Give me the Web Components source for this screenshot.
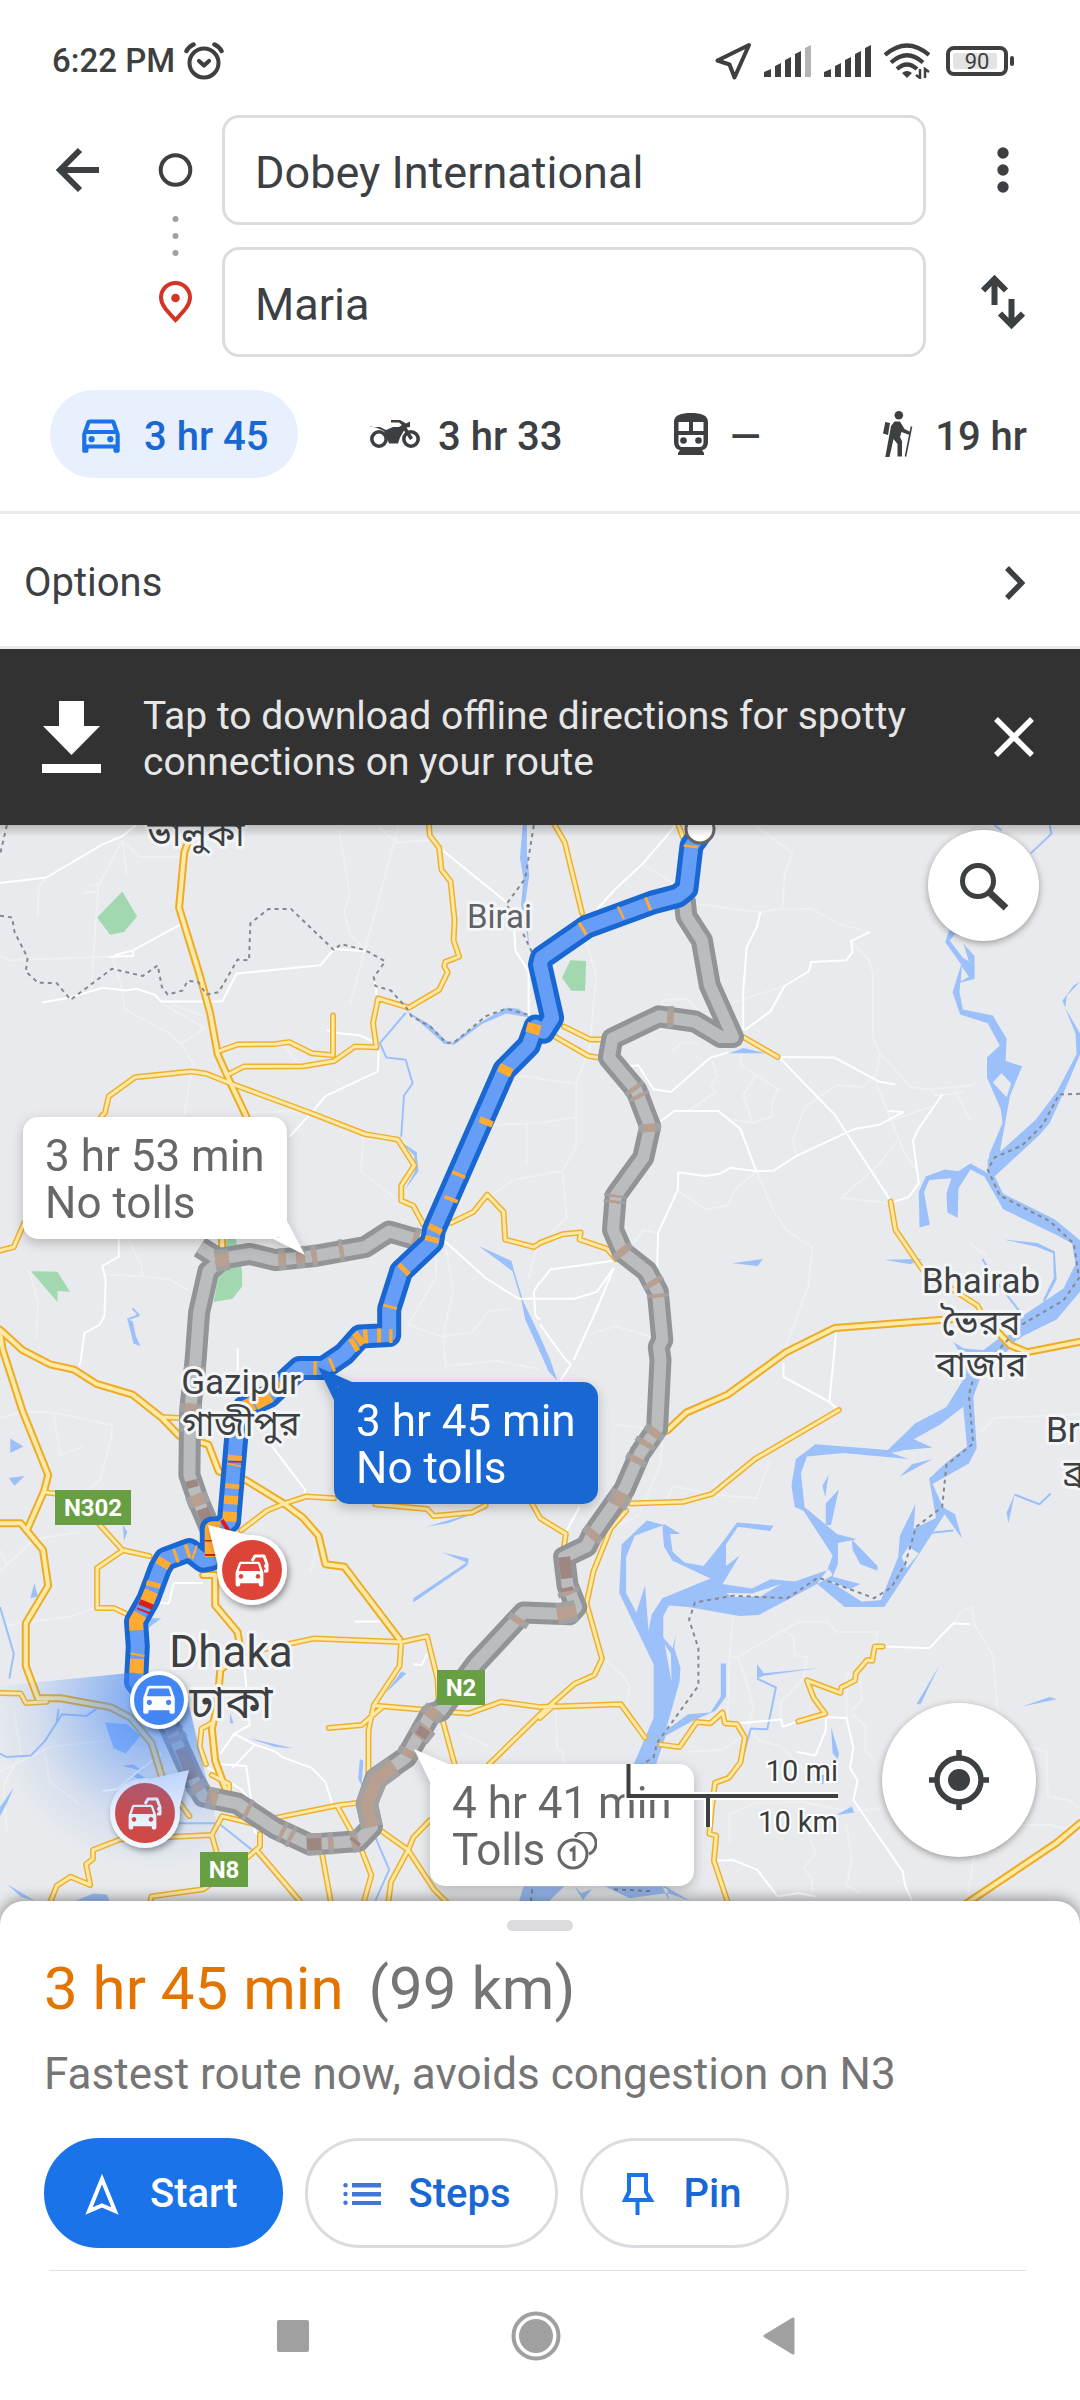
<!DOCTYPE html>
<html lang="en">
<head>
<meta charset="utf-8">
<meta name="viewport" content="width=device-width, initial-scale=1">
<title>Directions</title>
<style>
  body { margin: 0; background: #fff; color: #3c4043; font-family: Roboto, "Noto Sans", sans-serif; }
</style>
</head>
<body>
<directions-page></directions-page>

<script>
const RESET = `
  *, *::before, *::after { box-sizing: border-box; }
  :host { display: block; }
  button { font: inherit; color: inherit; background: none; border: 0; padding: 0; margin: 0; cursor: pointer; }
  svg { display: block; flex: none; }
`;
const define = (name, html) => {
  const template = document.createElement('template');
  template.innerHTML = html;
  customElements.define(name, class extends HTMLElement {
    constructor() {
      super();
      this.attachShadow({ mode: 'open' }).append(template.content.cloneNode(true));
    }
  });
};

const CAR_OUTLINE = 'M18.92 6.01C18.72 5.42 18.16 5 17.5 5h-11c-.66 0-1.21.42-1.42 1.01L3 12v8c0 .55.45 1 1 1h1c.55 0 1-.45 1-1v-1h12v1c0 .55.45 1 1 1h1c.55 0 1-.45 1-1v-8l-2.08-5.99zM6.85 7h10.29l1.08 3.11H5.77L6.85 7zM19 17H5v-5h14v5z';
const CAR_SOLID = 'M18.92 6.01C18.72 5.42 18.16 5 17.5 5h-11c-.66 0-1.21.42-1.42 1.01L3 12v8c0 .55.45 1 1 1h1c.55 0 1-.45 1-1v-1h12v1c0 .55.45 1 1 1h1c.55 0 1-.45 1-1v-8l-2.08-5.99zM6.5 16c-.83 0-1.5-.67-1.5-1.5S5.67 13 6.5 13s1.5.67 1.5 1.5S7.33 16 6.5 16zm11 0c-.83 0-1.5-.67-1.5-1.5s.67-1.5 1.5-1.5 1.5.67 1.5 1.5-.67 1.5-1.5 1.5zM5 11l1.5-4.5h11L19 11H5z';

/* ---------- status bar ---------- */
define('status-bar', `
<style>${RESET}
  :host { display: flex; align-items: center; height: 115px; padding: 6px 66px 0 52px; color: #3f3f3f; }
  .time { font-size: 33px; font-weight: 500; line-height: 40px; margin-right: 9px; }
  .spacer { flex: 1; }
  .icons { display: flex; align-items: center; gap: 12px; }
  .battery { display: flex; align-items: center; padding-left: 4px; }
  .cell { width: 62px; height: 30px; border: 4px solid #3f3f3f; border-radius: 8px; padding: 3px; }
  .level { display: block; width: 44px; height: 16px; background: #e3e3e3; border-radius: 2px; font-size: 22px; line-height: 17px; text-align: center; padding-left: 4px; }
  .tip { width: 4px; height: 10px; margin-left: 2px; border-radius: 2px; background: #3f3f3f; }
</style>
<span class="time">6:22 PM</span>
<svg width="40" height="38" viewBox="0 0 40 38" fill="none" stroke="#3f3f3f" stroke-linecap="round">
  <circle cx="20" cy="21" r="14.500" stroke-width="4"/>
  <path d="M2.500 9Q5 4.500 9.500 2.500M37.500 9Q35 4.500 30.500 2.500" stroke-width="4.500"/>
  <path d="M15 19l5 4.500 5-4.500" stroke-width="4.200" stroke-linejoin="round"/>
</svg>
<span class="spacer"></span>
<span class="icons">
  <svg width="37" height="38" viewBox="0 0 37 38" fill="none" stroke="#3f3f3f" stroke-width="4" stroke-linejoin="round"><path d="M34 3L2.500 18.500 14.500 22.500 19.500 35.500z"/></svg>
  <svg width="48" height="32" viewBox="0 0 48 32" fill="#3f3f3f"><path d="M0 32v-5l7-3v8zM11 32V21l6-3v14zM21 32V15l6-3v20zM31 32V9l6-3v26z"/><path d="M41 32V3l6-3v32z" fill="#b3b3b3"/></svg>
  <svg width="48" height="32" viewBox="0 0 48 32" fill="#3f3f3f"><path d="M0 32v-5l7-3v8zM11 32V21l6-3v14zM21 32V15l6-3v20zM31 32V9l6-3v26zM41 32V3l6-3v32z"/></svg>
  <svg width="46" height="36" viewBox="0 0 46 36" fill="none" stroke="#3f3f3f" stroke-width="4.200"><path d="M1 12Q23-7 45 12M7 19.500Q23 5 39 19.500M13 26Q23 17 33 26"/><path d="M18 30q5-4 10 0l-5 5z" fill="#3f3f3f" stroke="none"/><path d="M36 26v9l-4-3M41 35v-9l4 3" stroke-width="2.500"/></svg>
  <span class="battery"><span class="cell"><span class="level">90</span></span><span class="tip"></span></span>
</span>
`);

/* ---------- origin and destination ---------- */
customElements.define('place-field', class extends HTMLElement {
  constructor() {
    super();
    this.attachShadow({ mode: 'open' }).innerHTML = `
<style>${RESET}
  input { display: block; width: 100%; height: 110px; padding: 4px 30px 0; border: 3px solid #dadce0; border-radius: 17px; background: #fff; color: #3c4043; font: 400 45px/54px Roboto, sans-serif; outline: 0; }
</style><input type="text">`;
  }
  connectedCallback() {
    const input = this.shadowRoot.querySelector('input');
    input.value = this.getAttribute('value');
    input.setAttribute('aria-label', this.getAttribute('label'));
  }
});

define('route-header', `
<style>${RESET}
  :host { display: grid; grid-template-columns: 129px 93px 1fr 154px; grid-template-rows: 110px 110px; row-gap: 22px; }
  button { display: flex; align-items: center; justify-content: center; }
  .back { padding-left: 26px; }
  .stops { grid-column: 2; grid-row: 1 / 3; justify-self: center; }
  .destination { grid-column: 3; }
</style>
<button class="back" aria-label="Back"><svg width="46" height="46" viewBox="0 0 46 46" fill="none" stroke="#3c4043" stroke-width="6"><path d="M44 23H6M25 3L5 23l20 20"/></svg></button>
<svg class="stops" width="47" height="242" viewBox="0 0 47 242" fill="none">
  <circle cx="23.500" cy="55" r="14.800" stroke="#3c4043" stroke-width="4"/>
  <g fill="#9aa0a6"><circle cx="23.500" cy="104" r="3"/><circle cx="23.500" cy="121" r="3"/><circle cx="23.500" cy="138" r="3"/></g>
  <path d="M23.500 205C15 196 9 190 9 182.500a14.500 14.500 0 0 1 29 0C38 190 32 196 23.500 205z" stroke="#d33426" stroke-width="4"/><circle cx="23.500" cy="183" r="4.300" fill="#d33426"/>
</svg>
<place-field label="Starting point" value="Dobey International"></place-field>
<button aria-label="More options"><svg width="12" height="46" viewBox="0 0 12 46" fill="#3c4043"><circle cx="6" cy="6" r="5.700"/><circle cx="6" cy="23" r="5.700"/><circle cx="6" cy="40" r="5.700"/></svg></button>
<place-field class="destination" label="Destination" value="Maria"></place-field>
<button aria-label="Swap start and destination"><svg width="44" height="56" viewBox="0 0 44 56" fill="none" stroke="#3c4043" stroke-width="6"><path d="M13.500 31V5M2 16.500L13.500 5 25 16.500M30.500 25v26M19 39.500L30.500 51 42 39.500"/></svg></button>
`);

/* ---------- travel modes ---------- */
define('travel-mode', `
<style>${RESET}
  button { display: flex; align-items: center; height: 88px; padding: 0 28px; border-radius: 44px; font-size: 40px; font-weight: 500; line-height: 48px; white-space: nowrap; gap: 18px; color: #3c4043; }
  :host([selected]) button { background: #e8f0fe; color: #1967d2; padding-right: 30px; }
  span { padding-top: 6px; }
</style>
<button><slot name="icon"></slot><span><slot></slot></span></button>
`);

define('travel-modes', `
<style>${RESET}
  :host { display: grid; grid-template-columns: 293fr 301fr 212fr 199fr; padding: 33px 25px 33px 50px; border-bottom: 3px solid #e8eaed; }
</style>
<travel-mode selected><svg slot="icon" width="48" height="50" viewBox="1 0 23 24" fill="#1a73e8"><path d="${CAR_OUTLINE}"/><circle cx="7.500" cy="14.500" r="1.500"/><circle cx="16.500" cy="14.500" r="1.500"/></svg>3 hr 45</travel-mode>
<travel-mode><svg slot="icon" width="50" height="28" viewBox="0 0 50 28" fill="#3c4043"><g fill="none" stroke="#3c4043" stroke-width="3.600"><circle cx="9" cy="19" r="7.200"/><circle cx="41" cy="19" r="7.200"/></g><path d="M0 7h10l6 3 7-3h6l3-2-3-2.500h-8V0h9l6 3.500L40 1.500V7l-3.500.5L43 18l-3 2-6-9.500-4 7-2 6H19l-2-5.500-3-7-8-3.500-6-1z"/></svg>3 hr 33</travel-mode>
<travel-mode><svg slot="icon" width="42" height="42" viewBox="-4 0 42 42"><path d="M17 0C7 0 0 2 0 9v20c0 5 3 8 6 8l-2 3v2h26v-2l-2-3c3 0 6-3 6-8V9c0-7-7-9-17-9zM4.500 9H15v9H4.500zM19 9h10.500v9H19zM4.500 22h25v7c0 4-2 5-4 5h-17c-2 0-4-1-4-5z" fill="#3c4043" fill-rule="evenodd"/><circle cx="9.500" cy="27.500" r="3.300" fill="#3c4043"/><circle cx="24.500" cy="27.500" r="3.300" fill="#3c4043"/></svg>—</travel-mode>
<travel-mode><svg slot="icon" width="36" height="46" viewBox="-2 0 36 46" fill="#3c4043"><circle cx="15.800" cy="4.300" r="4.300"/><path d="M2.300 11l4.700 1-2 12-5-1.500zM11.500 10.500l5.500 0 4.500 7.500 6 3-1 3-8-3-1.500 5 2 4v15.500h-4.500V33l-4-5-4 18H2.300L8 15z"/><path d="M28.500 15.500l-6 30" stroke="#3c4043" stroke-width="1.600"/></svg>19 hr</travel-mode>
`);

define('options-row', `
<style>${RESET}
  :host { border-bottom: 3px solid #e8eaed; }
  button { display: flex; align-items: center; justify-content: space-between; width: 100%; height: 132px; padding: 6px 54px 0 24px; font-size: 40px; line-height: 48px; }
</style>
<button><span>Options</span><svg width="22" height="34" viewBox="0 0 22 34" fill="none" stroke="#3c4043" stroke-width="5.500"><path d="M3 2l14.500 15L3 32"/></svg></button>
`);

define('offline-banner', `
<style>${RESET}
  :host { display: flex; align-items: center; min-height: 176px; padding: 0 44px 0 42px; background: #323232; color: #e6e6e6; }
  p { flex: 1; margin: 4px 0 0 42px; font-size: 39px; line-height: 46px; }
</style>
<svg width="59" height="72" viewBox="0 0 59 72" fill="#fff"><path d="M17 0h25v25h16L29.500 54 1 25h16zM0 63h59v9H0z"/></svg>
<p>Tap to download offline directions for spotty connections on your route</p>
<button aria-label="Dismiss"><svg width="44" height="44" viewBox="0 0 44 44" stroke="#fff" stroke-width="5.500"><path d="M4 4l36 36M40 4L4 40"/></svg></button>
`);

/* ---------- map ---------- */
define('route-callout', `
<style>${RESET}
  :host { position: absolute; width: 264px; height: 122px; padding: 16px 0 0 22px; background: #fff; color: #676767; border-radius: 15px; font-size: 44px; line-height: 47px; white-space: nowrap; filter: drop-shadow(0 4px 6px rgba(0,0,0,.22)); }
  :host([active]) { background: #1967d2; color: #fff; }
  .tail { position: absolute; fill: #fff; display: none; }
  :host([active]) .tail { fill: #1967d2; }
  :host([tail="end"]) .end { display: block; right: -18px; bottom: -16px; }
  :host([tail="start"]) .start { display: block; left: -16px; top: -15px; }
  div { display: flex; align-items: center; gap: 12px; }
</style>
<svg class="tail end" width="34" height="34" viewBox="0 0 34 34"><path d="M0 17h8L16 0 34 34z"/></svg>
<svg class="tail start" width="34" height="34" viewBox="0 0 34 34"><path d="M0 0l34 15v4H20l-4 14z"/></svg>
<div><slot></slot></div><div><slot name="tolls"></slot></div>
`);

/* The drawing data is kept in four sheets; each letter selects the sheet whose
   origin and scale the points after it are measured in. */
const SHEETS = { A: [0, 820, .34439, .34439], B: [540, 820, .34439, .34439], C: [0, 1350, .34439, .35714], D: [540, 1350, .34439, .35714] };
const trace = (text, close) => text.trim().split(/\s*;\s*/).filter(Boolean).map(line => {
  let sheet = SHEETS.A, first = true, d = '';
  for (const token of line.split(/\s+/)) {
    if (SHEETS[token]) { sheet = SHEETS[token]; continue; }
    const [x, y] = token.split(',').map(Number);
    d += (first ? 'M' : 'L') + (sheet[0] + x * sheet[2]).toFixed(1) + ' ' + (sheet[1] + y * sheet[3]).toFixed(1);
    first = false;
  }
  return d + (close ? 'z' : '');
}).join('');

const WATER = `
A 1518,10 1530,10 1530,100 1537,160 1525,240 1538,380 1530,330 1513,245 1520,170 1510,110;
A 1180,555 1245,592 1298,643 1310,648 1390,590 1470,545 1505,548 1545,575 1470,562 1400,592 1320,652 1290,650 1240,605;
A 1165,935 1210,965 1215,1020 1175,1075 1205,1020 1203,975;
A 1390,1237 1485,1280 1493,1310 1520,1400 1568,1500 B 30,1568 D 50,85 25,60 B 0,1545 A 1525,1450 1515,1400 1488,1310;
A 370,1450 385,1455 395,1500 408,1528 388,1520;
B 550,677 590,662 655,677; B 558,1287 647,1275 632,1295; B 1000,1277 1110,1275 1075,1290;
B 1345,1218 1445,1228 1495,1253 1500,1335 1465,1400 1460,1395 1492,1330 1490,1258 1440,1238;
B 1188,320 1290,355 1205,332 1190,350 1228,400 1245,410 1230,360 1262,395 1262,462 1220,472 1218,500 1228,550 1315,568 1355,635 1352,700 1400,715 1365,800 1335,965 1300,1025 1305,970 1343,880 1338,840 1298,748 1298,690 1335,655 1300,590 1220,565 1198,500 1223,420 1177,355;
B 1568,470 1530,510 1525,545 1568,620 1568,680 1530,770 1480,880 1450,915 1320,1035 1345,1085 1495,1160 1568,1220 1568,1370 1500,1450 1400,1500 1385,1512 1395,1445 1520,1360 1555,1290 1545,1230 1500,1205 1345,1130 1290,1035 1250,1015 1215,1070 1213,1155 1183,1140 1180,1085 1195,1040 1130,1045 1115,1080 1132,1175 1102,1183 1100,1080 1120,1035 1175,1015 1215,1020 1250,997 1300,1025 1300,985 1340,960 1440,870 1500,790 1558,680 1555,620 1517,525 1550,480;
B 1395,1490 1370,1530 D 1290,60 1235,60 1235,20 B 1280,1545 1340,1500;
B 1200,1515 1230,1535 1300,1540 1270,1550 1215,1540;
D 1225,90 1240,60 1285,60 1255,140 1160,210 1085,250 1140,273 1060,280 1020,288 1070,305 880,288 775,298 758,345 768,440 862,515 920,530 865,540 865,600 850,635 930,655 900,670 850,650 805,655 835,615 850,575 765,450 740,440 730,380 743,305 800,264 1010,280 1090,205 1180,160;
D 1240,60 1285,60 1258,130 1268,275 1245,318 1140,375 1170,440 1205,460 1225,528 1175,460 1095,580 1000,720 885,720 805,655 845,650 935,705 990,700 1040,580 1045,520 1090,432 1085,500 1150,470 1130,360 1180,315 1240,270 1228,150;
D 805,655 850,630 840,615 740,648 670,642 615,668 530,655 580,575 540,605 540,545 575,495 668,507 678,492 572,483 525,545 475,605 420,595 385,565 378,515 408,515 360,487 355,495 360,550 385,590 495,640 355,695 325,740 315,785 305,660 280,735 250,680 250,580 275,520 360,490 310,477 237,545 230,680 330,880 330,1030 270,1165 335,1165 365,1080 440,1040 510,1010 540,970 540,878 525,878 525,970 495,1015 430,1020 365,1065 405,930 408,890 390,835 395,795 385,835 358,805 358,745 375,715 430,720 580,745 635,742;
D 905,530 980,605 980,618 930,600 908,560; D 1045,355 1080,320 1140,305; D 838,350 828,412 820,380; D 868,390 845,490 830,490 830,430;
D 1360,485 1355,455 1378,405; D 1160,882 1105,992 1093,992; D 1400,998 1480,972 1500,978; D 845,1055 868,1130 865,1145 850,1130; D 630,880 650,905 810,890 650,912 630,920; D 860,1302 905,1278 912,1295;
C 1500,1568 1520,1502 1568,1502 D 70,1502 0,1568; D 100,1502 125,1540 150,1510 120,1520; D 190,1502 365,1502 435,1542 370,1520 260,1535;
D 355,1502 375,1542 370,1510;
C 30,248 68,270 30,288; C 25,358 72,353 42,380; C 357,490 370,510 360,535; C 1237,495 1380,455 1442,435 1300,485; C 1283,567 1360,583 1360,597; C 1200,695 1362,590 1355,605 1200,707; C 100,652 110,690 88,695; C 440,750 468,752 420,785; C 1180,905 1120,960 1165,900;
C 305,1043 370,1048 408,1080 365,1130 330,1115; C 355,1165 385,1160 420,1180; C 0,1280 40,1225 20,1270 0,1305; C 723,1087 850,1115 800,1112; C 668,1015 678,1045 668,1045; C 1045,1145 1055,1150 1050,1220 1040,1200; C 20,1495 100,1542 60,1530; C 220,1542 270,1522 310,1525 318,1542;
C 380,1190 400,1185 440,1210 410,1205`;
const STREAMS = `
A 1178,560 1103,648 1122,690 1178,696 1198,765 1173,800 1165,920; A 370,1450 403,1438 385,1418;
B 1480,15 1485,40 1425,97; B 1320,15 1340,30; B 1285,1275 1300,1300; B 1325,1340 1395,1430; D 1378,405 1450,432 1483,402; D 1130,512 1200,505;
D 630,920 685,945 660,1062 612,1060 592,1130; C 0,720 40,850 27,920; C 408,1080 340,1060; C 0,1130 20,1140 90,1135 130,1095 180,1020 250,1025 280,1005; C 170,1005 165,1040; C 520,1325 635,1325 745,1410 860,1540; C 1088,1360 1130,1455 1090,1542; D 822,1190 820,1215`;
const ISLANDS = `B 1340,735 1368,765 1355,805 1315,762; B 1225,425 1245,455 1222,468; D 1070,550 1100,570 1065,610 1050,580; D 362,825 380,850 382,930; D 540,680 615,682 700,655 640,690 560,692`;
const PARKS = `A 355,208 398,280 360,325 320,333 282,283; A 90,1310 167,1312 203,1370 167,1368 167,1400; A 660,1215 685,1215 690,1250 703,1310 703,1355 675,1390 620,1400 640,1300; B 88,407 134,409 131,496 91,496 64,458`;
const LANES = `
A 355,60 285,190 265,490; A 355,60 405,107 525,107; A 355,60 368,160; A 0,395 30,407 315,397; A 110,280 112,195 135,165; A 255,190 295,183; A 242,212 288,206; A 985,30 1015,210 1000,270 1018,335 1055,370; A 1100,20 1150,65 1250,58; A 1158,15 1015,540; A 325,400 350,470 362,550 490,618 525,650 560,705 535,860; A 467,530 595,605 525,650; A 500,535 590,570; A 720,850 880,845; A 810,635 860,700; A 1055,920 1048,1020 1150,1100; A 1568,1030 1490,1045 1400,1110; A 1430,885 1568,880; A 1480,740 1568,750; A 1530,885 1530,1000; A 1268,1230 1265,1330 1185,1465 1280,1500 1370,1488 1420,1425 1490,1420; A 1295,1240 1315,1370 1290,1480 1290,1568; A 1560,1240 1535,1330; A 300,1320 415,1325 495,1335 545,1365; A 370,1215 410,1290 415,1325; A 85,1310 110,1400 105,1510;
B 640,268 450,243; B 705,250 710,160 733,95 630,20; B 640,268 705,257 790,258 870,303 958,325; B 903,352 955,405 967,450 967,635 988,680 975,740 940,775 860,770 768,835 735,930 745,975; B 988,680 1078,775; B 975,760 1055,960 1095,1020; B 1075,775 1130,782 1260,770 1262,760; B 1140,830 1030,870; B 1135,782 1150,800 1230,790; B 1205,785 1250,875; B 710,482 560,530; B 435,842 510,790 495,770 515,745 500,700; B 583,670 583,712 628,740 590,800 617,880 675,860 672,830 690,780 628,740; B 560,870 617,878; B 628,1020 680,1140 720,1195 790,1240 780,1350 725,1500 700,1568; B 628,1020 565,1075 545,1120 480,1130 402,1078; B 1035,935 985,1000 875,1098 1015,1112; B 130,340 163,450 145,660 105,765 105,950 65,1020 78,1155 30,1200; B 105,765 0,752; B 105,862 0,880; B 65,1020 0,1030; B 140,1495 220,1470 320,1500; B 270,1230 300,1190 340,1200; B 385,670 415,645 460,650; B 300,130 390,185; B 340,560 360,522 430,520 460,555; B 1248,1230 1295,1265;
C 0,190 70,172 155,175 325,210 325,240 290,365 240,400; C 155,175 175,295 240,270; C 0,560 20,600; C 25,770 210,745 280,720; C 0,1180 150,1110 300,1095 470,1130; C 130,1130 145,1210 230,1270; C 0,620 100,530 230,510; C 1290,0 1295,45 1440,30 1568,55; C 900,625 935,510; C 1340,1075 1420,1110; C 40,1010 60,1130 10,1220 20,1350;
D 365,430 385,380 500,405 628,415 668,310; D 500,400 520,360; D 220,210 320,220 360,200 350,320 285,465 200,500; D 1280,230 1320,190 1568,180; D 185,865 240,910 260,945 250,1000; D 560,740 550,860 575,860 705,785 755,760 835,762 862,790 980,790 970,830; D 550,860 545,1040; D 575,860 600,930 620,1000 605,1060 640,1095 700,1110 770,1180; D 705,785 735,800 740,855 775,860 765,920 700,985 700,1035; D 890,900 890,1030; D 905,1010 935,980 930,930 890,900; D 905,1020 945,1050 945,1120 970,1150; D 1200,765 1225,730 1255,720 1260,765 1315,855 1330,1020; D 1420,1110 1470,1125 1475,1250 1535,1260 1568,1285; D 985,1285 890,1290 760,1265 620,1270 550,1300 550,1380; D 760,1300 800,1410 765,1450 790,1480 790,1520; D 890,1330 905,1430 890,1500 930,1520; D 1240,1542 1260,1420; D 1568,1350 1480,1330 1400,1330; D 45,1000 50,1115 65,1125 70,1160; D 430,1125 530,1120 590,1080`;
const STREETS = `
A 0,183 135,167 295,72 355,47 395,15; A 315,397 387,395 387,378 335,392 330,400; A 387,378 525,303; A 122,530 205,515 297,487 365,495 395,490 450,508 467,527 645,527 687,446 930,422 970,375 1060,380; A 1088,470 1095,515; A 1285,88 1470,238; A 1493,320 1497,380 1535,440 1535,570; A 948,610 990,620 1045,625 1085,645; A 1100,670 1097,730 945,802 915,838 840,920; A 345,1215 345,1268 297,1295 307,1335 303,1440 290,1465 245,1490 235,1568 C 230,45; A 690,1535 C 690,60; A 1290,1222 1410,1330 1505,1390 B 0,1390 100,1390 165,1370 215,1300; A 1568,1340 1550,1370 1555,1440 1568,1450; B 215,1280 30,1305 0,1345; B 215,1300 165,1420 98,1568; B 0,1465 75,1568 D 90,40 60,85; B 395,15 295,130 215,205 165,260;
B 640,268 630,310 600,370 590,500 590,610; B 595,610 670,555 710,482 780,440 788,412 890,407 908,383 903,352 958,325; B 545,675 495,690 380,790 330,782 285,712 260,715; B 350,875 390,845 518,845 582,897 628,1020; B 695,688 855,690 985,760 1032,768; B 695,690 855,855 1018,1105; B 1025,1110 1070,1095 1100,1055 1083,930 1100,895 1168,797; B 1013,845 1055,848 985,885 910,898 745,975 678,1018 628,1020 553,1010 523,1027 478,1034 402,1023 400,1075 343,1198 340,1300;
B 860,1480 D 855,0 840,145 862,165; D 840,145 707,75 707,35; C 775,250 830,320 885,390 885,400; C 590,652 505,652 490,710 465,708; C 1030,760 1120,760; C 1240,850 1225,882 1200,880; C 640,1130 680,1075 725,1050 710,890; C 675,1170 740,1105 800,1125 820,1140 905,1170 945,1210 965,1270; C 590,1160 700,1230 730,1265 740,1350 765,1370; C 640,1160 715,1165 730,1265; C 680,1075 740,1105; C 300,1235 340,1230 400,1180 470,1130; D 75,510 115,440; D 580,1045 700,1035 705,1055 750,1040; D 830,1028 890,1030 910,1115 900,1170 922,1205 910,1260 1053,1460 1060,1500 1080,1542; D 830,1030 830,1065 800,1135 745,1125; D 1000,830 1130,835 1200,765 1248,768; D 510,1430 560,1428 630,1455 690,1530 750,1520 800,1530`;
const ROADS = `
A 295,860 305,850 316,802 392,747 555,730 600,737 670,765 900,850 1060,912 1155,928 1203,1003 1165,1062 1165,1105 1200,1120 1230,1175; A 640,670 690,652 800,650 840,645 905,677 967,683 967,568; A 665,738 708,716 880,715 970,700 1030,658 1093,660 1083,590 1098,518 1187,545 1275,493 1300,442 1290,425 1293,412 1333,397 1317,350 1320,290 1308,178 1282,145 1275,80 1248,45 1245,10; A 70,1170 40,1240 0,1250;
C 128,398 180,405; C 0,960 60,962 75,988 135,985; C 290,490 355,560 435,577; C 355,562 282,610 282,722 330,722 370,740; C 470,188 520,190; C 700,505 775,450 825,430 890,410 970,415; C 1090,432 1240,445 1260,465 1370,455 1410,435; C 1545,430 1568,470 D 15,480 75,515 70,550; C 700,850 780,835 910,808 1165,818 1240,802 1270,920 1275,1000 1320,1160; C 1165,818 1160,885 1085,995 1070,1065 1070,1185; C 955,1058 1050,1050 1110,1000; C 1085,995 1360,1018 1455,985 1568,1000 D 0,1000 235,992 305,1085; C 1420,1160 1568,1020 D 100,935 158,910 180,865 135,710 155,620 205,500 250,450; D 0,1030 40,995; C 615,1045 585,1060 580,1110 598,1160; C 615,1190 665,1215 665,1235; C 140,1560 165,1500 205,1475 262,1498 250,1440 270,1425 270,1400 350,1370 615,1358 645,1305 750,1330; C 615,1358 630,1410; C 755,1355 755,1390 720,1420; C 745,1400 870,1542; C 430,1568 440,1530 590,1510 620,1490; C 800,1310 980,1275 1035,1268; C 980,1278 1050,1400 1078,1470 1050,1568; C 935,1410 965,1568; C 500,1240 550,1305; C 1105,1345 1185,1400 1260,1510 1320,1568; C 1247,1318 1200,1365 1185,1400 1135,1490 1125,1568;
B 40,10 72,65 122,270; B 400,10 415,50; B 70,600 145,637 180,637; B 45,630 140,685 170,690; B 590,630 690,688; A 1310,1170 1375,1138 1415,1088 1462,1138 1467,1218 1550,1240 B 0,1228 65,1203 118,1198 115,1218 195,1245 220,1275; B 1018,1108 1032,1190 1110,1305 1270,1410 1290,1445; D 868,168 625,305 500,403 415,425 265,430; D 995,830 972,830 965,870 950,868 917,905 915,925 875,945 872,960 775,925 795,975 828,1018 750,1040; D 350,1105 405,1112 455,1042 495,1045 530,1015 537,1045 572,1048 595,1085 582,1155 548,1198 508,1212 498,1290 492,1355 512,1360 505,1430 550,1560`;
const HIGHWAYS = `
A 565,10 535,95 520,255 580,450 610,560 632,680 670,765 715,860 700,1000 645,1215 645,1250; A 0,1480 C 65,0 145,40 215,55 280,95 385,125 470,190 520,240 605,265 635,340 715,365 825,430 880,470 925,520 945,600 1000,607 1160,810; A 0,1490 C 8,0 65,170 140,350 128,395 80,500; C 0,485 60,485 125,560 140,660 75,765 75,885 110,975 175,975 320,1000 380,1030 440,1100 470,1195; C 590,630 625,630 625,715 690,790 700,850 640,895 630,1000 615,1060 625,1150 655,1230; B 1290,1445 1365,1525 1415,1545 1568,1515; B 1290,1445 1180,1450 855,1475 715,1545 D 545,125 425,175 370,225; D 1568,1325 1500,1380 1230,1555`;
const BORDERS = `
A 20,15 0,100; A 0,278 35,283 42,325 80,400 75,440 110,472 165,474 205,522 325,432 415,453 458,422 470,485 487,507 530,495 545,467 575,470 600,507 635,500 690,405 723,408 727,300 780,258 845,258 970,378 990,360 1060,378 1118,410 1105,430 1085,455 1090,482 1135,495 1180,545 1195,570 1250,600 1295,647 1320,645 1410,570 1470,548 1568,575; A 1550,15 1525,170 1470,245 1500,290 1545,385;
B 1568,795 1507,797 1460,885 1400,945 1320,980 1300,1015 1335,1090 1480,1165 1550,1230 1565,1330 1520,1395 1400,1465 1330,1540 D 1260,75 1245,125 1258,262 1180,322 1168,440 1092,495 1060,600 1020,665 970,695 808,637 718,695 560,688 450,707 433,755 460,835 460,940 340,1100 330,1140 290,1165; D 215,1510 320,1515; C 1545,1510 1540,1560`;
const ALTERNATES = `
A 580,1240 635,1275 725,1260 800,1278 920,1265 1060,1240 1130,1195 1210,1218;
A 650,1270 605,1310 578,1430 568,1568 C 552,170 550,350 575,420 610,500;
B 420,230 425,280 470,350 493,480 560,630 525,630 450,585 345,570 210,635 200,690 280,785 320,890 300,980 220,1090 212,1190 240,1255 310,1310 342,1370 355,1510 345,1530 350,1568 D 340,220 290,290 245,390 150,520 135,550 70,580 80,660 105,720 85,740 C 1520,735 1380,880 1280,1010 1250,1020 1180,1140 1090,1200 1065,1270 1080,1335 1040,1375 900,1385 800,1340 690,1270 590,1250 560,1200 490,1050`;
const ALTERNATE_TRAFFIC = `
A 625,1280 665,1275; A 808,1276 830,1274; A 860,1270 885,1268; A 905,1266 920,1264; A 985,1250 997,1248; A 1200,1213 1215,1218; B 388,573 370,572; B 270,775 277,785; B 285,797 290,807; B 318,882 320,905; B 218,1088 217,1095; B 217,1105 216,1112; B 232,1245 245,1262; B 325,1337 333,1350; B 342,1376 343,1386; D 338,222 325,240; D 310,255 302,268; D 283,300 275,315; D 240,400 220,435; D 160,508 145,525; D 80,672 85,685; D 105,730 50,740; C 1510,750 1500,765; C 1265,1005 1245,1030; C 1240,1055 1215,1085; C 1190,1120 1180,1138; C 1145,1165 1095,1200 1065,1270 1080,1335; C 1040,1374 1020,1378; C 968,1381 953,1382; C 935,1383 890,1385; C 850,1365 840,1360; C 825,1352 815,1347; C 725,1290 715,1285; C 630,1260 600,1252; C 580,1235 565,1215; C 515,1095 508,1080; C 505,1073 500,1065; C 555,150 553,175; C 553,210 552,230; C 568,405 580,435; C 567,45 565,70`;
const ALTERNATE_JAMS = `D 70,580 78,640; D 78,665 80,675; C 555,365 560,385; C 587,445 607,495; C 1235,1060 1220,1082; C 932,1383 892,1385; C 1035,1372 1028,1380; C 560,1200 525,1115`;
const MAIN = `B 465,40 440,75 425,200 400,220 325,240 135,310 5,400 0,420 35,575 10,615 A 1555,600 1535,655 1465,725 1260,1190 1255,1225 1165,1310 1130,1420 1130,1495 1045,1500 1000,1550 C 940,50 870,50 780,130 710,160 690,200 665,480 640,500 615,500 615,585 590,590 550,560 480,585 465,610 430,700 395,760 400,830 395,930 440,980`;
const SLOW = `
B 438,73 437,80; B 318,242 310,245; B 238,268 232,271; B 128,313 120,318; A 1553,592 1545,620; A 1473,715 1462,738; A 1415,868 1408,885; A 1334,1025 1330,1035; A 1312,1096 1308,1106; A 1268,1180 1260,1196; A 1256,1210 1252,1225; A 1178,1300 1168,1310; A 1134,1410 1132,1418; A 1140,1498 1130,1498; A 1107,1497 1095,1497; A 1068,1499 1055,1500; A 1050,1500 1035,1512; A 1035,1520 1022,1528; C 968,40 960,43; C 920,50 910,50; C 820,98 810,107; C 785,127 740,150; C 735,150 715,160; C 688,220 687,230; C 683,295 681,310; C 681,320 680,324; C 675,375 674,388; C 672,408 670,432; C 668,453 666,480; C 640,500 615,500 615,580; C 568,567 562,565; C 550,562 540,565; C 515,575 507,578; C 480,587 468,606; C 447,650 443,664; C 440,675 423,712; C 407,740 395,760 396,785; C 400,850 399,856; C 398,865 396,905`;
const JAM = `C 682,311 682,315; C 660,490 650,496; C 615,571 615,577; C 615,532 615,536; C 427,705 421,720; C 418,728 416,733`;

const PIN_CARS = `<path d="${CAR_SOLID}" fill="#fff"/>`;
const trafficPin = (x, y, tail) => `
  <g filter="url(#shade)"><path d="${tail}" fill="#fff"/><circle cx="${x}" cy="${y}" r="35" fill="#fff"/></g>
  <circle cx="${x}" cy="${y}" r="30" fill="#db4437"/>
  <svg x="${x - 21}" y="${y - 16}" width="37" height="37" viewBox="0 0 24 24">${PIN_CARS}</svg>
  <path d="M${x} ${y - 9}l3-5h9l3 8v7h-3" fill="none" stroke="#fff" stroke-width="3"/><circle cx="${x + 14}" cy="${y - 4}" r="2" fill="#fff"/>`;

define('route-map', `
<style>${RESET}
  :host { position: relative; overflow: hidden; background: #e8eaed; }
  .canvas { position: absolute; inset: 0; width: 100%; height: 100%; }
  .place { font-family: Roboto, "Noto Sans Bengali", "Noto Sans", sans-serif; fill: #3c4043; stroke: #f4f5f7; stroke-width: 6px; stroke-linejoin: round; paint-order: stroke; }
  .shield { font-family: Roboto, sans-serif; font-size: 24px; font-weight: 700; fill: #fff; text-anchor: middle; }
  .round { position: absolute; display: grid; place-items: center; border-radius: 50%; background: #fff; box-shadow: 0 2px 7px rgba(0,0,0,.35); }
  .search { top: 5px; right: 41px; width: 111px; height: 111px; }
  .locate { bottom: 68px; right: 44px; width: 154px; height: 154px; }
  .top-shade { position: absolute; inset: 0 0 auto; height: 12px; background: linear-gradient(rgba(0,0,0,.2), transparent); }
  .scale { position: absolute; left: 624px; top: 935px; }
</style>
<svg class="canvas" viewBox="0 825 1080 1100" preserveAspectRatio="xMidYMin slice" fill="none" stroke-linejoin="round">
  <defs>
    <radialGradient id="beam" gradientUnits="userSpaceOnUse" cx="159" cy="1700" r="170"><stop offset="0" stop-color="#4285f4" stop-opacity=".75"/><stop offset=".45" stop-color="#4285f4" stop-opacity=".34"/><stop offset=".75" stop-color="#4285f4" stop-opacity=".1"/><stop offset="1" stop-color="#4285f4" stop-opacity="0"/></radialGradient>
    <filter id="shade" x="-30%" y="-30%" width="160%" height="160%"><feDropShadow dx="2" dy="3" stdDeviation="3" flood-opacity=".4"/></filter>
  </defs>
  <path d="${trace(PARKS, true)}" fill="#a1d8b0"/>
  <path d="${trace(LANES)}" stroke="#eff0f2" stroke-width="2"/>
  <path d="${trace(WATER, true)}" fill="#9cc0f9"/>
  <path d="${trace(STREAMS)}" stroke="#9cc0f9" stroke-width="2"/>
  <path d="${trace(ISLANDS, true)}" fill="#e8eaed"/>
  <path d="${trace(STREETS)}" stroke="#fff" stroke-width="2"/>
  <g stroke-linecap="round">
    <path d="${trace(ROADS)}" stroke="#eeb02f" stroke-width="6"/>
    <path d="${trace(HIGHWAYS)}" stroke="#ecac26" stroke-width="8"/>
    <path d="${trace(ROADS)}" stroke="#ffe9a4" stroke-width="3"/>
    <path d="${trace(HIGHWAYS)}" stroke="#ffe9a4" stroke-width="4"/>
  </g>
  <path d="${trace(BORDERS)}" stroke="#85898f" stroke-width="2" stroke-dasharray="4 4"/>
  <path d="${trace(ALTERNATES)}" stroke="#929497" stroke-width="22"/>
  <path d="${trace(ALTERNATES)}" stroke="#babcbe" stroke-width="12"/>
  <path d="${trace(ALTERNATE_TRAFFIC)}" stroke="#a2a2a3" stroke-width="22"/>
  <path d="${trace(ALTERNATE_TRAFFIC)}" stroke="#b99f90" stroke-width="12"/>
  <path d="${trace(ALTERNATE_JAMS)}" stroke="#9e8682" stroke-width="12"/>
  <path d="${trace(MAIN)}" stroke="#1967d2" stroke-width="24"/>
  <path d="${trace(MAIN)}" stroke="#669df6" stroke-width="14"/>
  <path d="${trace(SLOW)}" stroke="#ffab32" stroke-width="14"/>
  <path d="${trace(JAM)}" stroke="#d91c1c" stroke-width="14"/>
  <circle cx="700" cy="829" r="14" fill="#fff" stroke="#666" stroke-width="3"/>

  <g class="place" font-size="35">
    <text x="196" y="846" text-anchor="middle">ভালুকা</text>
    <text x="467" y="928" font-size="33" fill="#5f6368">Birai</text>
    <text x="981" y="1293" text-anchor="middle">Bhairab</text>
    <text x="981" y="1335" text-anchor="middle">ভৈরব</text>
    <text x="981" y="1377" text-anchor="middle">বাজার</text>
    <text x="241" y="1394" text-anchor="middle">Gazipur</text>
    <text x="241" y="1436" text-anchor="middle">গাজীপুর</text>
    <text x="1046" y="1442">Br</text>
    <text x="1064" y="1485">ব্র</text>
    <text x="231" y="1667" font-size="44" text-anchor="middle">Dhaka</text>
    <text x="231" y="1718" font-size="44" text-anchor="middle">ঢাকা</text>
  </g>
  <g fill="#689f43"><path d="M55 1490h76v35H55zM437 1670h48v35h-48zM200 1852h48v35h-48z"/></g>
  <g class="shield"><text x="93" y="1516">N302</text><text x="461" y="1696">N2</text><text x="224" y="1878">N8</text></g>

  ${trafficPin(252, 1570, 'M208 1525L252 1536 219 1570z')}
  ${trafficPin(145, 1813, 'M189 1770L178 1813 145 1780z')}
  <path d="${trace('C 390,903 -150,955 -150,1568 690,1568 540,960', true)}" fill="url(#beam)"/>
  <circle cx="159" cy="1700" r="29" fill="#fff" filter="url(#shade)"/><circle cx="159" cy="1700" r="25" fill="#4285f4"/>
  <svg x="138" y="1677" width="42" height="42" viewBox="0 0 24 24">${PIN_CARS}</svg>
</svg>
<span class="top-shade"></span>
<route-callout tail="end" style="left:23px;top:292px">3 hr 53 min<span slot="tolls">No tolls</span></route-callout>
<route-callout active tail="start" style="left:334px;top:557px">3 hr 45 min<span slot="tolls">No tolls</span></route-callout>
<route-callout tail="start" style="left:430px;top:939px">4 hr 41 min<span slot="tolls">Tolls</span><svg slot="tolls" width="40" height="38" viewBox="0 0 40 38" fill="none" stroke="#676767" stroke-width="3"><circle cx="16" cy="22" r="14"/><path d="M18 5a11.500 11.500 0 1 1 14 17M13 19l4-3v13"/></svg></route-callout>
<svg class="scale" width="218" height="76" viewBox="0 0 218 76" font-family="Roboto, sans-serif" font-size="29">
  <g fill="none"><path d="M4.500 4v32H214M84 36v31" stroke="#fff" stroke-width="8"/><path d="M4.500 4v32H214M84 36v31" stroke="#3f3f3f" stroke-width="4"/></g>
  <g fill="#3c3c3c" stroke="#fff" stroke-width="4" paint-order="stroke" text-anchor="end"><text x="214" y="21">10 mi</text><text x="214" y="72">10 km</text></g>
</svg>
<button class="round search" aria-label="Search along route"><svg width="50" height="50" viewBox="0 0 50 50" fill="none" stroke="#3c4043"><circle cx="19" cy="20" r="15.500" stroke-width="5"/><path d="M31 32l16 15" stroke-width="7"/></svg></button>
<button class="round locate" aria-label="My location"><svg width="60" height="60" viewBox="0 0 60 60" fill="none" stroke="#3c4043" stroke-width="5.500"><circle cx="30" cy="30" r="22"/><circle cx="30" cy="30" r="11" fill="#3c4043" stroke="none"/><path d="M30 0v9M30 51v9M0 30h9M51 30h9"/></svg></button>
`);

/* ---------- trip summary ---------- */
define('pill-button', `
<style>${RESET}
  button { display: flex; align-items: center; height: 110px; padding: 2px 44px 0 35px; gap: 28px; border: 3px solid #dadce0; border-radius: 55px; color: #1967d2; font-size: 40px; font-weight: 500; line-height: 48px; }
  :host([primary]) button { padding: 2px 42px 0 35px; gap: 26px; background: #1a73e8; border-color: #1a73e8; color: #fff; }
</style>
<button><slot name="icon"></slot><slot></slot></button>
`);

define('trip-sheet', `
<style>${RESET}
  :host { position: relative; margin-top: -24px; padding: 19px 44px 0; background: #fff; border-radius: 24px 24px 0 0; box-shadow: 0 -2px 14px rgba(0,0,0,.4); }
  .handle { width: 66px; height: 11px; margin: 0 auto; border-radius: 6px; background: #dadce0; }
  h1 { display: flex; gap: 25px; margin: 22px 0 0; font-weight: 400; font-size: 60px; line-height: 72px; color: #757575; }
  h1 b { font-weight: 400; color: #e37400; }
  p { margin: 24px 0 0; font-size: 44px; line-height: 50px; color: #757575; }
  .actions { display: flex; gap: 22px; margin-top: 39px; padding-bottom: 22px; }
  hr { margin: 0 10px 0 5px; border: 0; border-top: 1px solid #dfe1e5; }
</style>
<div class="handle"></div>
<h1><b>3 hr 45 min</b><span>(99 km)</span></h1>
<p>Fastest route now, avoids congestion on N3</p>
<div class="actions">
  <pill-button primary><svg slot="icon" width="42" height="42" viewBox="0 0 42 42" fill="none" stroke="#fff" stroke-width="4"><path d="M20 6L7 38l13-5.500L33 38z"/></svg>Start</pill-button>
  <pill-button><svg slot="icon" width="38" height="22" viewBox="0 0 38 22" fill="#3f76d8"><path d="M9 0h29v4.500H9zM9 9h29v4.500H9zM9 18h29v4H9z"/><circle cx="2.500" cy="2.300" r="2.200"/><circle cx="2.500" cy="11" r="2.200"/><circle cx="2.500" cy="19.800" r="2.200"/></svg>Steps</pill-button>
  <pill-button><svg slot="icon" width="38" height="42" viewBox="-5 0 38 42" fill="none" stroke="#1a73e8" stroke-width="4"><path d="M6 2h17v17l5 8H2l4-8zM14.500 27v15"/></svg>Pin</pill-button>
</div>
<hr>
`);

define('system-nav', `
<style>${RESET}
  :host { position: relative; display: flex; height: 129px; padding: 0 180px 0 172px; background: #fff; }
  button { flex: 1; display: grid; place-items: center; }
</style>
<button aria-label="Recent apps"><svg width="32" height="32" viewBox="0 0 32 32"><rect width="32" height="32" rx="2" fill="#a0a0a0"/></svg></button>
<button aria-label="Home"><svg width="50" height="50" viewBox="0 0 50 50"><circle cx="25" cy="25" r="22.500" fill="none" stroke="#a0a0a0" stroke-width="4"/><circle cx="25" cy="25" r="17" fill="#a0a0a0"/></svg></button>
<button aria-label="Back"><svg width="34" height="38" viewBox="0 0 34 38"><path d="M31 2v34L3 19z" fill="#a0a0a0" stroke="#a0a0a0" stroke-width="3" stroke-linejoin="round"/></svg></button>
`);

define('directions-page', `
<style>${RESET}
  :host { display: flex; flex-direction: column; min-height: 100vh; }
  route-map { flex: 1; min-height: 600px; }
</style>
<status-bar></status-bar>
<route-header></route-header>
<travel-modes></travel-modes>
<options-row></options-row>
<offline-banner></offline-banner>
<route-map></route-map>
<trip-sheet></trip-sheet>
<system-nav></system-nav>
`);
</script>
</body>
</html>
